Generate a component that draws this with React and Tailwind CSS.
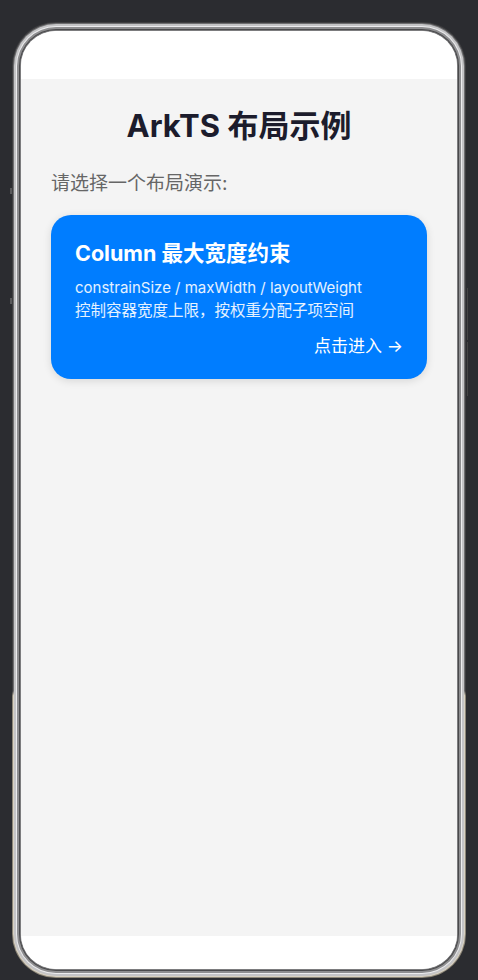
const FONT = "font-['Inter','Noto_Sans_CJK_SC',sans-serif]";

const Bezel = ({ children }) => (
  <div className="relative w-[454px] h-[956px] rounded-[44px] p-px bg-[linear-gradient(to_bottom,#3e3e40_70%,#8c8678_70.5%)]">
    {/* side keys */}
    <div className="absolute left-[-2px] top-[166px] w-[2px] h-[6px] bg-[#5a5a5c]" />
    <div className="absolute left-[-2px] top-[276px] w-[2px] h-[6px] bg-[#5a5a5c]" />
    <div className="absolute right-[-2px] top-[266px] w-px h-[52px] bg-[#444]" />
    <div className="absolute right-[-2px] top-[320px] w-px h-[54px] bg-[#444]" />
    <div className="h-full rounded-[43px] p-px bg-[linear-gradient(to_bottom,#6e6e70_70%,#d8d1c2_70.5%)]">
      <div className="h-full rounded-[42px] p-[2px] bg-[#c4c4c6]">
        <div className="h-full rounded-[40px] p-px bg-[#ececee]">
          <div className="h-full rounded-[39px] p-[2px] bg-[#8e8e90]">
            <div className="h-full rounded-[37px] p-px bg-[#4a4a4c]">
              <div className="h-full rounded-[36px] p-px bg-[#7c7c7e]">
                {children}
              </div>
            </div>
          </div>
        </div>
      </div>
    </div>
  </div>
);

const LayoutCard = ({ title, api, desc }) => (
  <div className="rounded-[20px] bg-[#007dff] px-6 pt-[23px] pb-[21px] text-white shadow-[0_2px_8px_rgba(0,0,0,0.12)]">
    <h2 className="text-[21.5px] leading-[30px] font-bold">{title}</h2>
    <p className="mt-[8px] text-[15px] leading-[23px] text-white/90">{api}</p>
    <p className="text-[15.5px] leading-[23px] text-white/90">{desc}</p>
    <div className="mt-[12px] flex justify-end">
      <span className="text-[17px] leading-[24px]">点击进入 →</span>
    </div>
  </div>
);

export default function App() {
  return (
    <div className={`min-h-[980px] bg-[#2b2c30] pt-[22px] pl-[12px] ${FONT}`}>
      <Bezel>
        <div className="h-full rounded-[35px] overflow-hidden flex flex-col bg-white">
          <div className="h-[48px] bg-white" />
          <div className="flex-1 bg-[#f4f4f4] px-[30px] pt-[26px]">
            <h1 className="text-center text-[31px] leading-[42px] font-bold text-[#1c1c2c]">
              ArkTS 布局示例
            </h1>
            <p className="mt-[24px] text-[19px] leading-[26px] text-[#666]">
              请选择一个布局演示:
            </p>
            <div className="mt-[18px]">
              <LayoutCard
                title="Column 最大宽度约束"
                api="constrainSize / maxWidth / layoutWeight"
                desc="控制容器宽度上限，按权重分配子项空间"
              />
            </div>
          </div>
          <div className="h-[33px] bg-white" />
        </div>
      </Bezel>
    </div>
  );
}
